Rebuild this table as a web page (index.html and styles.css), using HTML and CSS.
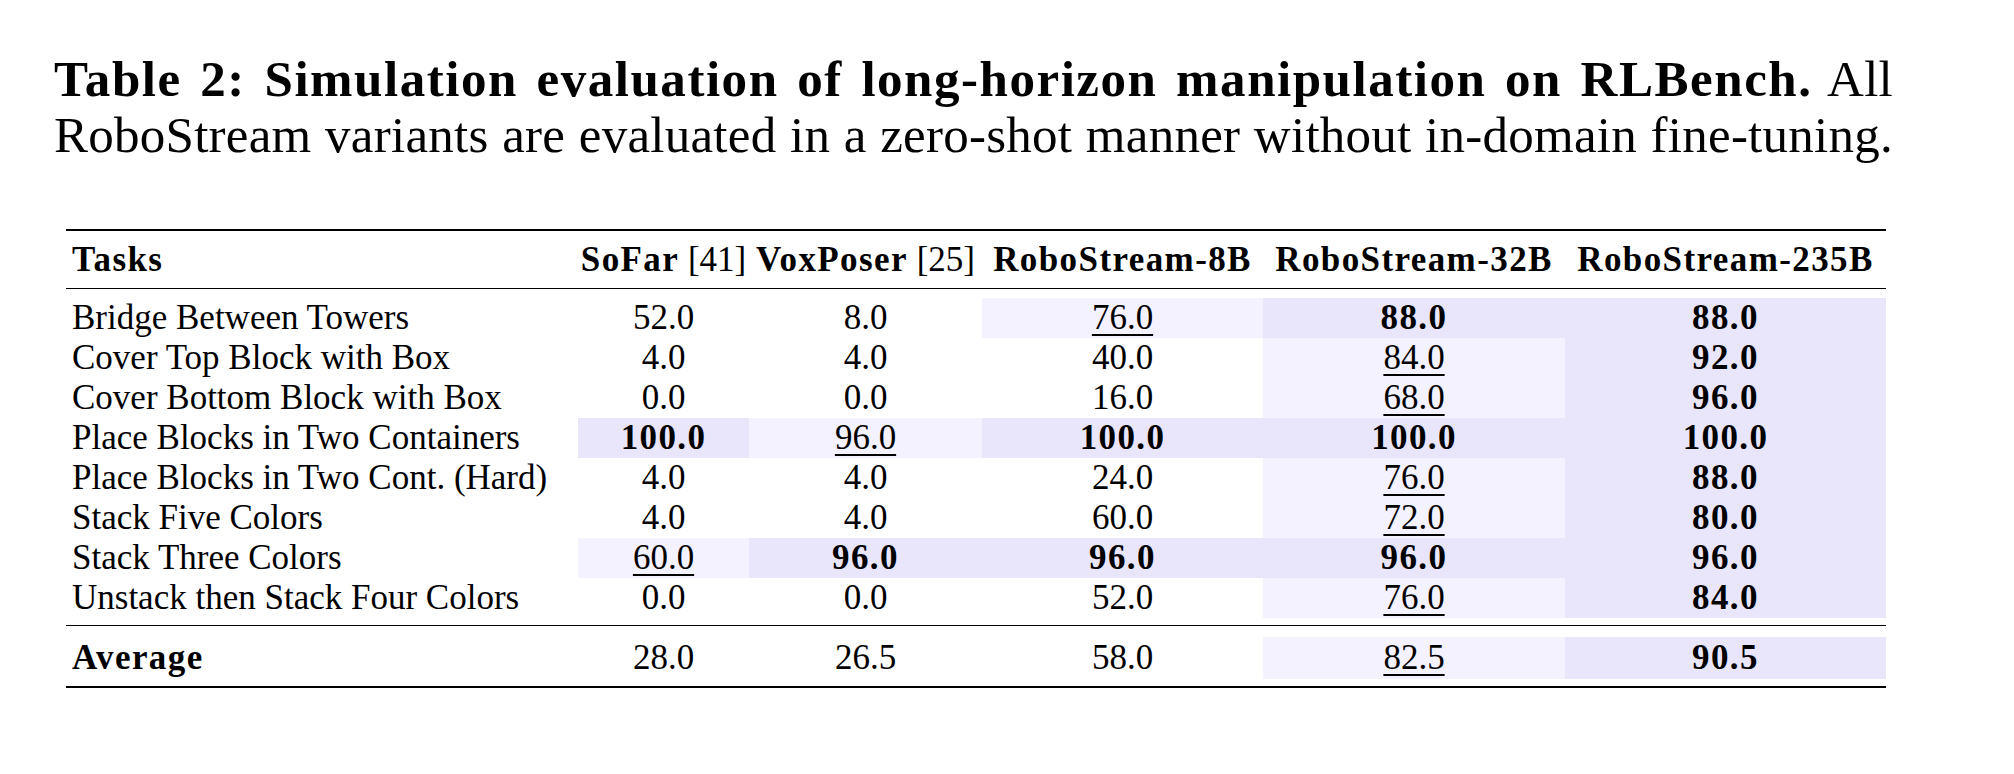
FILE: index.html
```html
<!DOCTYPE html>
<html lang="en">
<head>
<meta charset="utf-8">
<title>Table 2</title>
<link rel="stylesheet" href="styles.css">
</head>
<body>
<main class="page">
  <p class="caption"><strong>Table 2: Simulation evaluation of long-horizon manipulation on RLBench.</strong> All<br>RoboStream variants are evaluated in a zero-shot manner without in-domain fine-tuning.</p>
  <table class="results">
    <colgroup>
      <col class="c-task">
      <col class="c-sofar">
      <col class="c-vox">
      <col class="c-8b">
      <col class="c-32b">
      <col class="c-235b">
    </colgroup>
    <thead>
      <tr>
        <th class="task"><strong>Tasks</strong></th>
        <th><strong>SoFar</strong> [41]</th>
        <th><strong>VoxPoser</strong> [25]</th>
        <th><strong>RoboStream-8B</strong></th>
        <th><strong>RoboStream-32B</strong></th>
        <th><strong>RoboStream-235B</strong></th>
      </tr>
    </thead>
    <tbody>
      <tr class="gap-below"><td colspan="6"></td></tr>
      <tr>
        <td class="task">Bridge Between Towers</td>
        <td>52.0</td>
        <td>8.0</td>
        <td class="second"><u>76.0</u></td>
        <td class="best"><strong>88.0</strong></td>
        <td class="best"><strong>88.0</strong></td>
      </tr>
      <tr>
        <td class="task">Cover Top Block with Box</td>
        <td>4.0</td>
        <td>4.0</td>
        <td>40.0</td>
        <td class="second"><u>84.0</u></td>
        <td class="best"><strong>92.0</strong></td>
      </tr>
      <tr>
        <td class="task">Cover Bottom Block with Box</td>
        <td>0.0</td>
        <td>0.0</td>
        <td>16.0</td>
        <td class="second"><u>68.0</u></td>
        <td class="best"><strong>96.0</strong></td>
      </tr>
      <tr>
        <td class="task">Place Blocks in Two Containers</td>
        <td class="best"><strong>100.0</strong></td>
        <td class="second"><u>96.0</u></td>
        <td class="best"><strong>100.0</strong></td>
        <td class="best"><strong>100.0</strong></td>
        <td class="best"><strong>100.0</strong></td>
      </tr>
      <tr>
        <td class="task">Place Blocks in Two Cont. (Hard)</td>
        <td>4.0</td>
        <td>4.0</td>
        <td>24.0</td>
        <td class="second"><u>76.0</u></td>
        <td class="best"><strong>88.0</strong></td>
      </tr>
      <tr>
        <td class="task">Stack Five Colors</td>
        <td>4.0</td>
        <td>4.0</td>
        <td>60.0</td>
        <td class="second"><u>72.0</u></td>
        <td class="best"><strong>80.0</strong></td>
      </tr>
      <tr>
        <td class="task">Stack Three Colors</td>
        <td class="second"><u>60.0</u></td>
        <td class="best"><strong>96.0</strong></td>
        <td class="best"><strong>96.0</strong></td>
        <td class="best"><strong>96.0</strong></td>
        <td class="best"><strong>96.0</strong></td>
      </tr>
      <tr>
        <td class="task">Unstack then Stack Four Colors</td>
        <td>0.0</td>
        <td>0.0</td>
        <td>52.0</td>
        <td class="second"><u>76.0</u></td>
        <td class="best"><strong>84.0</strong></td>
      </tr>
      <tr class="gap-above mid"><td colspan="6"></td></tr>
      <tr class="gap-below after-mid"><td colspan="6"></td></tr>
      <tr class="avg">
        <td class="task"><strong>Average</strong></td>
        <td>28.0</td>
        <td>26.5</td>
        <td>58.0</td>
        <td class="second"><u>82.5</u></td>
        <td class="best"><strong>90.5</strong></td>
      </tr>
      <tr class="gap-above bottom"><td colspan="6"></td></tr>
    </tbody>
  </table>
</main>
</body>
</html>
```

FILE: styles.css
```css
html, body {
  margin: 0;
  padding: 0;
  background: #ffffff;
}

body {
  font-family: "Liberation Serif", "Times New Roman", serif;
  color: #000000;
}

.page {
  padding: 51px 121px 0 54px;
}

.caption {
  margin: 0;
  font-size: 51px;
  line-height: 56.4px;
  letter-spacing: 0.005em;
  text-align: justify;
  text-align-last: justify;
}

.caption strong {
  letter-spacing: 0.03em;
}

.results {
  margin: 65px 0 0 12px;
  width: 1820px;
  table-layout: fixed;
  border-collapse: collapse;
  font-size: 35px;
}

.c-task { width: 512px; }
.c-sofar { width: 171px; }
.c-vox { width: 233px; }
.c-8b { width: 281px; }
.c-32b { width: 302px; }
.c-235b { width: 321px; }

.results strong {
  letter-spacing: 0.04em;
}

.results th {
  font-weight: normal;
  text-align: center;
  white-space: nowrap;
  line-height: 40px;
  padding: 9px 0 8px;
  border-top: 2px solid #000;
  border-bottom: 1px solid #000;
}

.results td {
  text-align: center;
  white-space: nowrap;
  line-height: 33px;
  padding: 3px 0 4px;
  height: 40px;
  box-sizing: border-box;
}

.results .task {
  text-align: left;
  padding-left: 6px;
}

.results .avg td {
  height: 42px;
  padding-top: 4px;
  padding-bottom: 5px;
}

.results .gap-below td {
  height: 10px;
  padding: 0;
}

.results .after-mid td {
  height: 12px;
}

.results .gap-above td {
  height: 7px;
  padding: 0;
}

.results .bottom td {
  height: 8px;
}

.results .mid td {
  border-bottom: 1px solid #000;
}

.results .bottom td {
  border-bottom: 2px solid #000;
}

.results u {
  text-decoration-thickness: 1.5px;
  text-underline-offset: 5px;
}

.results .second {
  background: #f4f2fe;
}

.results .best {
  background: #e9e6fc;
}
```
